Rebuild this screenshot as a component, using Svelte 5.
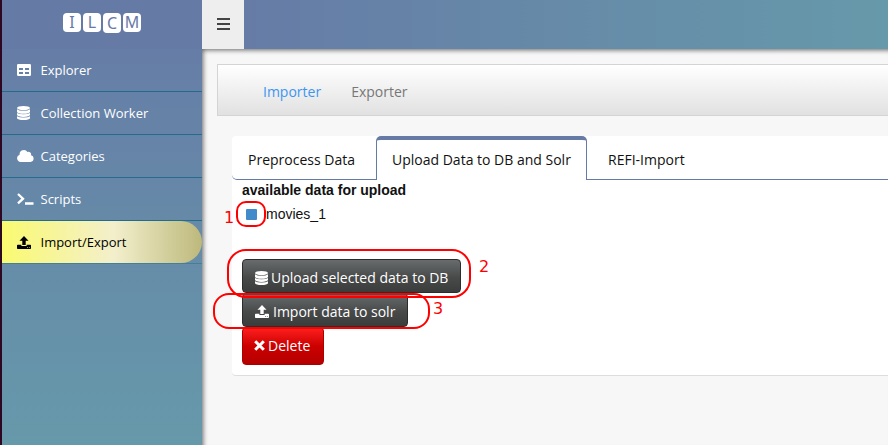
<script>
  const menu = [
    { label: 'Explorer', icon: 'table' },
    { label: 'Collection Worker', icon: 'database' },
    { label: 'Categories', icon: 'cloud' },
    { label: 'Scripts', icon: 'terminal' },
    { label: 'Import/Export', icon: 'upload', active: true }
  ];
  const logo = ['I', 'L', 'C', 'M'];
</script>

{#snippet icon(name)}
  {#if name === 'table'}
    <svg class="ico" width="14" height="12" viewBox="0 0 14 12"><path fill="currentColor" fill-rule="evenodd" d="M1.200 0h11.600Q14 0 14 1.200v9.600q0 1.200-1.200 1.200H1.200Q0 12 0 10.800V1.200Q0 0 1.200 0ZM2 4v2h4V4ZM8 4v2h4V4ZM2 8v2h4V8ZM8 8v2h4V8Z" /></svg>
  {:else if name === 'database'}
    <svg class="ico" width="13" height="14" viewBox="0 0 12 14" preserveAspectRatio="none"><g fill="currentColor"><ellipse cx="6" cy="2.100" rx="6" ry="2.100" /><path d="M0 3.300Q1.800 4.800 6 4.800T12 3.300V5.900Q11.300 7.700 6 7.700T0 5.900ZM0 7Q1.800 8.300 6 8.300T12 7V9.100Q11.300 10.900 6 10.900T0 9.100ZM0 10.200Q1.800 11.500 6 11.500T12 10.200V12.200Q11.300 14 6 14T0 12.200Z" /></g></svg>
  {:else if name === 'cloud'}
    <svg class="ico" width="17" height="12" viewBox="0 0 17 12"><path fill="currentColor" d="M3.700 12A3.700 3.700 0 0 1 2.600 4.800 4.300 4.300 0 0 1 10.500 2.100 2.600 2.600 0 0 1 14 5.300 3.400 3.400 0 0 1 13.500 12Z" /></svg>
  {:else if name === 'terminal'}
    <svg class="ico" width="17" height="12" viewBox="0 0 17 12"><path fill="none" stroke="currentColor" stroke-width="2.300" d="m1 1 5 4.700-5 4.700M8 10.500h8.500" /></svg>
  {:else if name === 'upload'}
    <svg class="ico" width="14" height="13" viewBox="0 0 14 13"><path fill="currentColor" fill-rule="evenodd" d="M7 0l4.500 4.700H8.700V9H5.300V4.700H2.500ZM.8 8.800h3.600V10h5.200V8.800h3.600q.8 0 .8.800v2.600q0 .8-.8.800H.8q-.8 0-.8-.8V9.600q0-.8.8-.8ZM10 11.100v.7h.8v-.7ZM11.900 11.100v.7h.8v-.7Z" /></svg>
  {:else}
    <svg class="ico" width="11" height="11" viewBox="0 0 11 11"><path fill="none" stroke="currentColor" stroke-width="3" d="m1.200 1.200 8.600 8.600M9.800 1.200 1.200 9.800" /></svg>
  {/if}
{/snippet}

<div class="app">
  <aside>
    <div class="brand">
      {#each logo as letter}<span class:tall={letter === 'C'}>{letter}</span>{/each}
    </div>
    <nav>
      {#each menu as item}
        <div class="row">
          <a class:active={item.active}>
            <span class="slot">{@render icon(item.icon)}</span>{item.label}
          </a>
        </div>
      {/each}
    </nav>
  </aside>
  <div class="right">
    <header>
      <button class="burger" aria-label="Toggle menu"><i></i><i></i><i></i></button>
    </header>
    <main>
      <div class="navbar"><span class="current">Importer</span><span>Exporter</span></div>
      <section>
        <div class="tabs">
          <div class="tab before">Preprocess Data</div>
          <div class="tab selected">Upload Data to DB and Solr</div>
          <div class="tab after">REFI-Import</div>
        </div>
        <div class="body">
          <b>available data for upload</b>
          <label><span class="check"></span><span>movies_1</span></label>
          <div class="buttons">
            <button class="btn first">{@render icon('database')}<span>Upload selected data to DB</span></button>
            <button class="btn second">{@render icon('upload')}<span>Import data to solr</span></button>
            <button class="btn danger">{@render icon('times')}<span>Delete</span></button>
          </div>
        </div>
      </section>
    </main>
  </div>
  <div class="ring one"></div>
  <div class="ring two"></div>
  <div class="ring three"></div>
  <span class="mark m1">1</span>
  <span class="mark m2">2</span>
  <span class="mark m3">3</span>
</div>

<style>
  * { box-sizing: border-box; }
  .app {
    position: relative;
    display: flex;
    width: 888px;
    height: 445px;
    overflow: hidden;
    background: #f7f7f7;
    font-family: "Open Sans", "Noto Sans", sans-serif;
    font-size: 14px;
    color: #111;
  }
  .ico { display: block; flex: none; }
  aside {
    width: 202px;
    flex: none;
    border-left: 2px solid #2e0722;
    background: linear-gradient(#667aa6, #6699aa);
  }
  .brand {
    display: flex;
    justify-content: center;
    gap: 2px;
    height: 49px;
    padding-top: 13px;
    background: #667aa6;
  }
  .brand span {
    width: 18px;
    height: 19px;
    border-radius: 4px;
    background: #fff;
    color: #667aa6;
    font: 16px/19px "Noto Sans", sans-serif;
    text-align: center;
  }
  .brand .tall { height: 20px; line-height: 20px; }
  .row { height: 43px; border-bottom: 1px solid #246c8c; }
  .row:last-child { border-color: #427f9c; }
  a {
    display: flex;
    align-items: center;
    height: 42px;
    padding-left: 15px;
    color: #fff;
    font-size: 13px;
  }
  .slot { width: 23.500px; flex: none; }
  a.active {
    color: #000;
    border-radius: 0 21px 21px 0;
    background: linear-gradient(90deg, #fafa70, #f3efcc 56%, #bdb97c);
  }
  .right { flex: 1; min-width: 0; display: flex; flex-direction: column; }
  header {
    height: 49px;
    flex: none;
    background: linear-gradient(90deg, #667aa6, #6699aa);
  }
  .burger {
    display: flex;
    flex-direction: column;
    justify-content: center;
    align-items: center;
    gap: 3px;
    width: 42px;
    height: 49px;
    padding: 0 0 2px;
    border: 0;
    background: #eee;
  }
  .burger i { width: 13px; height: 2px; background: #444; }
  main {
    flex: 1;
    padding: 15px 0 0 15px;
    box-shadow: inset 3px 3px 5px -2px rgba(0, 0, 0, .6);
  }
  .navbar {
    display: flex;
    align-items: center;
    gap: 30px;
    height: 52px;
    padding: 2px 0 0 45px;
    border: 1px solid #d4d4d4;
    border-right: 0;
    background: linear-gradient(#fff, #e1e1e1);
    color: #777;
  }
  .current { color: #3c96f0; }
  section {
    height: 240px;
    margin: 20px 0 0 15px;
    border-bottom: 1px solid #ddd;
    border-radius: 4px 0 0 4px;
    background: #fff;
  }
  .tabs { display: flex; height: 44px; }
  .tab {
    height: 44px;
    border-bottom: 1px solid #667aa6;
    line-height: 48px;
    white-space: nowrap;
  }
  .before { width: 144px; padding-left: 16px; border-radius: 0 0 0 5px; }
  .selected {
    width: 211px;
    padding-left: 15px;
    line-height: 40px;
    border: 1px solid #667aa6;
    border-top-width: 4px;
    border-bottom: 0;
    border-radius: 5px 5px 0 0;
  }
  .after { flex: 1; padding-left: 21px; }
  .body { padding-left: 10px; font-family: "Liberation Sans", Arial, sans-serif; }
  b { display: block; height: 20px; line-height: 20px; }
  label { display: flex; align-items: center; height: 28px; padding-left: 4px; }
  .check {
    width: 11px;
    height: 11px;
    margin-right: 9px;
    border-radius: 1px;
    background: #428bca;
  }
  .buttons {
    display: flex;
    flex-direction: column;
    align-items: flex-start;
    padding-top: 31px;
  }
  .btn {
    display: flex;
    align-items: center;
    gap: 4px;
    height: 34px;
    padding: 3px 0 0 12px;
    border: 1px solid #2b2d2d;
    border-radius: 4px;
    background: linear-gradient(#686c6c, #484a4a 55%, #3b3d3d);
    color: #fff;
    font: 14px "Open Sans", "Noto Sans", sans-serif;
    white-space: nowrap;
  }
  .first { width: 219px; gap: 3px; }
  .second { width: 166px; }
  .danger {
    width: 82px;
    height: 38px;
    gap: 2px;
    padding: 0 0 1px 11px;
    gap: 3px;
    border-color: #a00;
    background: linear-gradient(#ff2020, #cc0000 50%, #b50000);
  }
  .ring { position: absolute; border: 2px solid #f00; }
  .one { left: 236px; top: 201px; width: 30px; height: 26px; border-radius: 10px; }
  .two { left: 227px; top: 249px; width: 244px; height: 49px; border-radius: 19px; }
  .three { left: 213px; top: 293px; width: 217px; height: 36px; border-radius: 16px; }
  .mark {
    position: absolute;
    color: #f00;
    font: 16px/20px "DejaVu Sans", sans-serif;
  }
  .m1 { left: 224px; top: 208px; }
  .m2 { left: 479px; top: 257px; }
  .m3 { left: 433px; top: 299px; }
</style>
